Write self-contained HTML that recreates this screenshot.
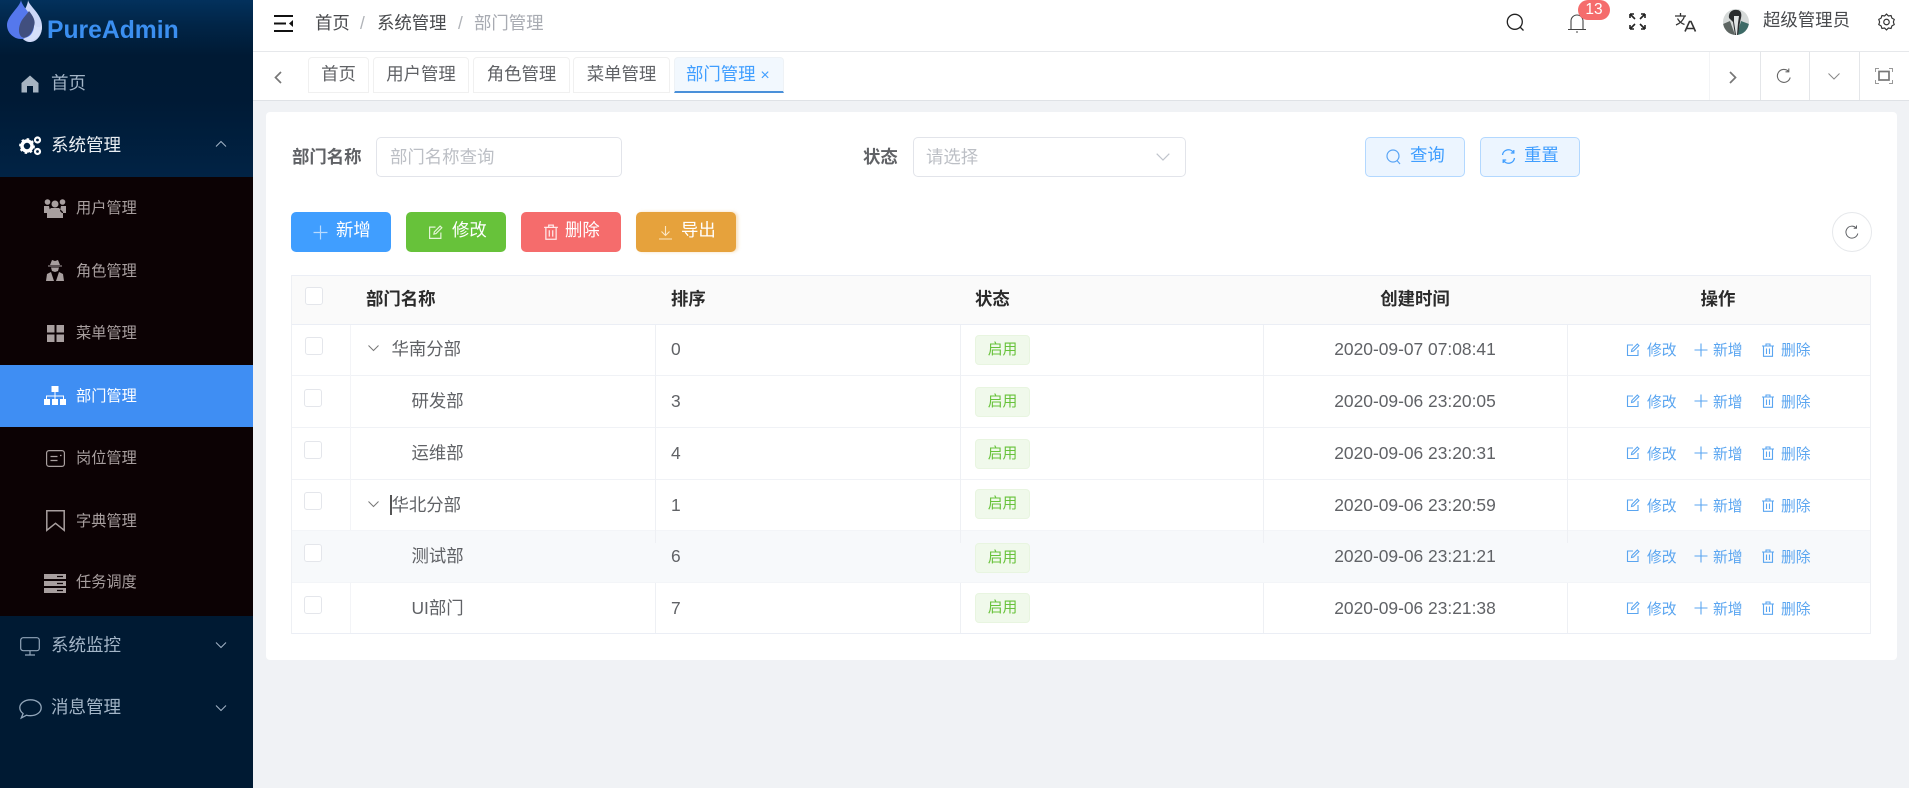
<!DOCTYPE html>
<html lang="zh-CN">
<head>
<meta charset="utf-8">
<title>部门管理</title>
<style>
*{box-sizing:border-box;margin:0;padding:0}
html,body{width:1909px;height:788px;overflow:hidden;background:#f0f2f5}
body{position:relative;font-family:"Liberation Sans","Noto Sans CJK SC",sans-serif;font-size:17.4px;color:#606266}
.a{position:absolute}
.t{position:absolute;white-space:nowrap;height:24px;line-height:24px}
.c{transform:translateX(-50%)}
svg{position:absolute;overflow:visible}
.top{color:#a3b5c7;font-size:17.5px}
.sub{color:#a89f9f;font-size:15.2px}
.tab{position:absolute;top:57px;height:36px;background:#fff;border:1px solid #f0f0f0;border-radius:4px 4px 0 0;color:#606266;line-height:33px;text-align:center}
.btn{position:absolute;top:212px;width:100px;height:40px;border-radius:5px;color:#fff}
.cb{position:absolute;width:18px;height:18px;background:#fff;border:1px solid #e4e6eb;border-radius:3px}
.tag{position:absolute;left:975px;width:55px;height:30px;background:#f0f9eb;border:1px solid #e8f5e0;border-radius:4px;color:#67c23a;font-size:14.8px;line-height:28px;text-align:center}
.h{height:1px;left:291px;width:1579px;background:#ebeef5}
.v{width:1px;background:#eef0f4}
.op{color:#5aa5f0;font-size:14.8px}
.th{color:#2b2b2b;font-weight:700}
.ic{fill:none;stroke:#5aa5f5;stroke-width:1.2}
</style>
</head>
<body>
<svg width="0" height="0" style="position:absolute">
<defs>
<symbol id="edit" viewBox="0 0 14 14"><path d="M7 2H1.5v10.5H12V7M5.5 8.5l.4-2L11.3 1l1.6 1.6L7.5 8z" fill="none" stroke="currentColor" stroke-width="1.1"/></symbol>
<symbol id="plus" viewBox="0 0 14 14"><path d="M7 .5v13M.5 7h13" fill="none" stroke="currentColor" stroke-width="1.1"/></symbol>
<symbol id="trash" viewBox="0 0 14 14"><path d="M1 3h12M5 3V1h4v2M2.5 3v10.3h9V3M5.5 5.5v5.5M8.5 5.5v5.5" fill="none" stroke="currentColor" stroke-width="1.1"/></symbol>
</defs>
</svg>

<!-- SIDEBAR -->
<div class="a" style="left:0;top:0;width:253px;height:788px;background:linear-gradient(180deg,#03315c 0,#012547 25px,#001a34 56px,#001a35 100px,#012345 177px,#001a33 178px,#001a33 788px)"></div>
<div class="a" style="left:0;top:177px;width:253px;height:439px;background:#0c0204"></div>
<div class="a" style="left:0;top:365px;width:253px;height:62px;background:#3f8ef3"></div>

<svg style="left:6px;top:0" width="38" height="44" viewBox="0 0 38 44">
<path d="M22 0c1 6 14 14 14 26a12 15 0 0 1-24 2C12 17 22 8 22 0z" fill="#ced8f8"/>
<path d="M15 0c-1 7-14 16-14 25 0 8 7 14 14 14 8 0 13-6 13-14C28 16 16 7 15 0z" fill="#5578ec"/>
<path d="M23 11c4 5 7 10 5 15-1 6-5 11-10 12-2-1-3-1-4-3-2-4-1-10 2-15 2-3 5-6 7-9z" fill="#414f7e"/>
<path d="M28 26c1 6-3 11-10 12 4 3 8 3 11 1 5-3 7-8 7-13-2 2-5 1-8 0z" fill="#d5dffa"/>
</svg>
<div class="t" style="left:47px;top:19px;color:#3b8ff0;font-size:24.7px;font-weight:700">PureAdmin</div>

<svg style="left:21px;top:75px" width="18" height="18" viewBox="0 0 18 18"><path d="M9 .5L.5 8v9.5H6V11h6v6.500h5.500V8z" fill="#a6b4c2"/></svg>
<div class="t top" style="left:51px;top:71px">首页</div>

<svg style="left:19px;top:135px" width="23" height="21" viewBox="0 0 23 21"><circle cx="8" cy="11" r="5" fill="none" stroke="#fff" stroke-width="3.500"/><circle cx="8" cy="11" r="7" fill="none" stroke="#fff" stroke-width="1.800" stroke-dasharray="2.500 2.900"/><circle cx="18.500" cy="5" r="2.500" fill="none" stroke="#fff" stroke-width="2.200"/><circle cx="18.500" cy="16.500" r="2.500" fill="none" stroke="#fff" stroke-width="2.200"/></svg>
<div class="t" style="left:51px;top:133px;color:#e9eef3;font-size:17.5px">系统管理</div>
<svg style="left:215px;top:140px" width="12" height="8" viewBox="0 0 12 8"><path d="M1 6.500l5-5 5 5" fill="none" stroke="#a3b5c7" stroke-width="1"/></svg>

<svg style="left:44px;top:197px" width="22" height="22" viewBox="0 0 22 22"><g fill="#a89f9f"><circle cx="3.500" cy="5" r="2.800"/><circle cx="18.500" cy="5" r="2.800"/><circle cx="11" cy="7" r="3.500"/><path d="M0 9h5l1 5-2 2H0zM22 9h-5l-1 5 2 2h4zM3 21v-6l4-4h8l4 4v6z"/></g></svg>
<div class="t sub" style="left:76px;top:197px">用户管理</div>

<svg style="left:45px;top:260px" width="20" height="22" viewBox="0 0 20 22"><g fill="#a89f9f"><path d="M5 5L7 0l3 1 3-1 2 5zM3 5.500h14v1H3zM6 7.500h8L13 11l-3 1-3-1zM1 21l1-7 4-2 3 9zM19 21l-1-7-4-2-3 9z"/></g></svg>
<div class="t sub" style="left:76px;top:260px">角色管理</div>

<svg style="left:47px;top:325px" width="17" height="17" viewBox="0 0 17 17"><g fill="#a89f9f"><rect width="7.500" height="7.500"/><rect x="9.500" width="7.500" height="7.500"/><rect y="9.500" width="7.500" height="7.500"/><rect x="9.500" y="9.500" width="7.500" height="7.500"/></g></svg>
<div class="t sub" style="left:76px;top:322px">菜单管理</div>

<svg style="left:44px;top:386px" width="22" height="20" viewBox="0 0 22 20"><g fill="#fff"><rect x="7.500" y="0" width="7" height="6"/><rect x="0" y="13" width="6" height="6"/><rect x="8" y="13" width="6" height="6"/><rect x="16" y="13" width="6" height="6"/><path d="M10.500 6h1v3.500H20V13h-1v-2.500h-7.500V13h-1v-2.500H3V13H2V9.500h8.500z"/></g></svg>
<div class="t sub" style="left:76px;top:385px;color:#fff">部门管理</div>

<svg style="left:46px;top:450px" width="19" height="17" viewBox="0 0 19 17"><rect x=".6" y=".6" width="17.800" height="15.800" rx="2.500" fill="none" stroke="#a89f9f" stroke-width="1.200"/><path d="M4.500 6.500h7M4.500 10.500h7M14 5.500h1.500" stroke="#a89f9f" stroke-width="1.200" fill="none"/></svg>
<div class="t sub" style="left:76px;top:447px">岗位管理</div>

<svg style="left:46px;top:510px" width="19" height="22" viewBox="0 0 19 22"><path d="M.8.800h17.400v19.500l-8.700-7-8.700 7z" fill="none" stroke="#a89f9f" stroke-width="1.500"/></svg>
<div class="t sub" style="left:76px;top:510px">字典管理</div>

<svg style="left:44px;top:574px" width="22" height="19" viewBox="0 0 22 19"><g fill="#a89f9f"><rect width="22" height="5"/><rect y="7" width="22" height="5"/><rect y="14" width="22" height="5"/></g><path d="M13 2.500h6M13 9.500h6M13 16.500h6" stroke="#0c0204" stroke-width="1.200"/></svg>
<div class="t sub" style="left:76px;top:571px">任务调度</div>

<svg style="left:20px;top:637px" width="20" height="19" viewBox="0 0 20 19"><rect x=".7" y=".7" width="18.600" height="13" rx="2.500" fill="none" stroke="#92a6ba" stroke-width="1.200"/><path d="M10 14v4M5 18h10" stroke="#92a6ba" stroke-width="1.200" fill="none"/></svg>
<div class="t top" style="left:51px;top:633px">系统监控</div>
<svg style="left:215px;top:641px" width="12" height="8" viewBox="0 0 12 8"><path d="M1 1.500l5 5 5-5" fill="none" stroke="#a3b5c7" stroke-width="1"/></svg>

<svg style="left:19px;top:699px" width="23" height="20" viewBox="0 0 23 20"><path d="M11.500.8C5.500.8.800 4.300.800 8.700c0 2.300 1.300 4.300 3.300 5.800L2.300 19l5.200-2.800c1.300.4 2.600.5 4 .5 6 0 10.700-3.500 10.700-8S17.500.8 11.500.8z" fill="none" stroke="#92a6ba" stroke-width="1.300"/></svg>
<div class="t top" style="left:51px;top:695px">消息管理</div>
<svg style="left:215px;top:704px" width="12" height="8" viewBox="0 0 12 8"><path d="M1 1.500l5 5 5-5" fill="none" stroke="#a3b5c7" stroke-width="1"/></svg>

<!-- HEADER -->
<div class="a" style="left:253px;top:0;width:1656px;height:52px;background:#fff;border-bottom:1px solid #e6e8eb"></div>
<svg style="left:274px;top:15px" width="19" height="17" viewBox="0 0 19 17"><path d="M0 1h19M0 8.500h12M0 16h19" stroke="#111" stroke-width="2" fill="none"/><path d="M19 5v7l-4-3.500z" fill="#111"/></svg>
<div class="t" style="left:315px;top:11px;color:#484a4d">首页</div>
<div class="t" style="left:360px;top:11px;color:#b0b3b8">/</div>
<div class="t" style="left:377px;top:11px;color:#484a4d">系统管理</div>
<div class="t" style="left:458px;top:11px;color:#b0b3b8">/</div>
<div class="t" style="left:474px;top:11px;color:#a8abb2">部门管理</div>

<svg style="left:1506px;top:13px" width="19" height="19" viewBox="0 0 19 19"><circle cx="8.800" cy="8.800" r="7.500" fill="none" stroke="#222" stroke-width="1.300"/><path d="M14 14l3.500 3.500" stroke="#222" stroke-width="1.300"/></svg>
<svg style="left:1568px;top:13px" width="19" height="20" viewBox="0 0 19 20"><path d="M0 16.500h18M3 16.500V8a6 6 0 0 1 12 0v8.500M8 19h2" fill="none" stroke="#444" stroke-width="1.100"/></svg>
<div class="a" style="left:1578px;top:0;width:32px;height:20px;background:#f56c6c;border-radius:10px;color:#fff;font-size:15.500px;line-height:20px;text-align:center">13</div>
<svg style="left:1629px;top:13px" width="17" height="17" viewBox="0 0 17 17"><path d="M1 1l5 5M1 1h4M1 1v4M16 1l-5 5M16 1h-4M16 1v4M1 16l5-5M1 16h4M1 16v-4M16 16l-5-5M16 16h-4M16 16v-4" fill="none" stroke="#222" stroke-width="1.600"/></svg>
<svg style="left:1675px;top:13px" width="21" height="19" viewBox="0 0 21 19"><path d="M0 3h11M5.500 0v3M9.500 3c-1 4-4 7-8.500 9M2.500 5.500c1.500 3 4 5 7 6" fill="none" stroke="#333" stroke-width="1.300"/><path d="M10 18.500l4.500-10h1.500l4.500 10M11.500 15.500h7.500" fill="none" stroke="#333" stroke-width="1.600"/></svg>
<svg style="left:1723px;top:9px" width="26" height="26" viewBox="0 0 26 26"><defs><clipPath id="av"><circle cx="13" cy="13" r="13"/></clipPath></defs><g clip-path="url(#av)"><rect width="26" height="26" fill="#d5d9d8"/><path d="M0 15l7-3 5 14H0z" fill="#5d6562"/><path d="M26 15l-8-3-4 14h12z" fill="#3d6a66"/><path d="M6 9c-1-5 3-9 8-8 4 0 5 4 4 8l-1 4-2 13h-3l-2-13z" fill="#2a2c2e"/><path d="M11 7h5l-1 7-1 12h-1l-2-13z" fill="#e1e4e4"/></g></svg>
<div class="t" style="left:1763px;top:8px;color:#484a4d">超级管理员</div>
<svg style="left:1878px;top:13px" width="17" height="18" viewBox="0 0 16 17"><path d="M8 1l1.800 1.800 2.500-.4.800 2.400 2.200 1.200-.8 2.500.8 2.500-2.200 1.200-.8 2.400-2.500-.4L8 16l-1.800-1.800-2.500.4-.8-2.400L.7 11l.8-2.500L.7 6l2.200-1.200.8-2.400 2.500.4z" fill="none" stroke="#333" stroke-width="1.100"/><circle cx="8" cy="8.500" r="2.600" fill="none" stroke="#333" stroke-width="1.100"/></svg>

<!-- TAB BAR -->
<div class="a" style="left:253px;top:52px;width:1656px;height:49px;background:#fff;border-bottom:1px solid #dfe2e6"></div>
<svg style="left:274px;top:71px" width="8" height="13" viewBox="0 0 8 13"><path d="M7 1L1.500 6.500 7 12" fill="none" stroke="#777" stroke-width="1.700"/></svg>
<div class="tab" style="left:308px;width:61px">首页</div>
<div class="tab" style="left:373px;width:96px">用户管理</div>
<div class="tab" style="left:473px;width:97px">角色管理</div>
<div class="tab" style="left:573px;width:97px">菜单管理</div>
<div class="tab" style="left:674px;width:110px;background:#f2f8fe;border-color:#eef2f6;border-bottom:2px solid #4a90d9;color:#409eff;text-align:left;padding-left:11px">部门管理 <span style="font-size:16px">×</span></div>

<div class="a v" style="left:1709px;top:52px;height:48px;background:#f3f4f6"></div>
<div class="a v" style="left:1760px;top:52px;height:48px;background:#e4e6e9"></div>
<div class="a v" style="left:1809px;top:52px;height:48px;background:#e4e6e9"></div>
<div class="a v" style="left:1859px;top:52px;height:48px;background:#e4e6e9"></div>
<svg style="left:1729px;top:71px" width="8" height="13" viewBox="0 0 8 13"><path d="M1 1l5.500 5.500L1 12" fill="none" stroke="#777" stroke-width="1.700"/></svg>
<svg style="left:1776px;top:68px" width="16" height="16" viewBox="0 0 16 16"><path d="M14.200 9.500A6.500 6.500 0 1 1 12.500 3.300M12.800 .5v3.300H9.500" fill="none" stroke="#666" stroke-width="1.100"/></svg>
<svg style="left:1828px;top:73px" width="12" height="7" viewBox="0 0 12 7"><path d="M.5.500L6 6 11.500.5" fill="none" stroke="#888" stroke-width="1"/></svg>
<svg style="left:1875px;top:68px" width="18" height="16" viewBox="0 0 18 16"><rect x="4" y="3.500" width="10" height="8.500" fill="none" stroke="#777" stroke-width="1.700"/><path d="M.5 4V.5H4M14 .5h3.500V4M.5 12v3.500H4M14 15.500h3.500V12" fill="none" stroke="#999" stroke-width="1"/></svg>

<!-- CARD -->
<div class="a" style="left:266px;top:112px;width:1631px;height:548px;background:#fff;border-radius:4px"></div>

<div class="t" style="left:292px;top:145px;font-weight:700;color:#606266">部门名称</div>
<div class="a" style="left:376px;top:137px;width:246px;height:40px;border:1px solid #e2e4ea;border-radius:5px;background:#fff"></div>
<div class="t" style="left:390px;top:145px;color:#bcbfc5">部门名称查询</div>
<div class="t" style="left:863px;top:145px;font-weight:700;color:#606266">状态</div>
<div class="a" style="left:913px;top:137px;width:273px;height:40px;border:1px solid #e2e4ea;border-radius:5px;background:#fff"></div>
<div class="t" style="left:926px;top:145px;color:#bcbfc5">请选择</div>
<svg style="left:1156px;top:153px" width="14" height="8" viewBox="0 0 14 8"><path d="M.7.700L7 7 13.300.7" fill="none" stroke="#c0c4cc" stroke-width="1.200"/></svg>

<div class="a" style="left:1365px;top:137px;width:100px;height:40px;background:#ecf5ff;border:1px solid #b3d8ff;border-radius:5px"></div>
<svg style="left:1386px;top:149px" width="15" height="16" viewBox="0 0 15 16"><circle cx="7" cy="7" r="6" class="ic"/><path d="M11 11.500l3 3.500" class="ic"/></svg>
<div class="t" style="left:1410px;top:143px;color:#409eff">查询</div>
<div class="a" style="left:1480px;top:137px;width:100px;height:40px;background:#ecf5ff;border:1px solid #b3d8ff;border-radius:5px"></div>
<svg style="left:1501px;top:149px" width="15" height="15" viewBox="0 0 15 15"><path d="M1.500 6A6 6 0 0 1 12.500 3.500M13.500 9A6 6 0 0 1 2.500 11.500M12.800 1v3h-3M2.200 14v-3h3" fill="none" stroke="#409eff" stroke-width="1.300"/></svg>
<div class="t" style="left:1524px;top:143px;color:#409eff">重置</div>

<div class="btn" style="left:291px;background:#409eff"></div>
<svg style="left:313px;top:225px;color:#b9dbff" width="15" height="15"><use href="#plus"/></svg>
<div class="t" style="left:336px;top:218px;color:#fff">新增</div>
<div class="btn" style="left:406px;background:#67c23a"></div>
<svg style="left:428px;top:225px;color:#e4f5d8" width="15" height="15"><use href="#edit"/></svg>
<div class="t" style="left:452px;top:218px;color:#fff">修改</div>
<div class="btn" style="left:521px;background:#f56c6c"></div>
<svg style="left:543px;top:224px;color:#ffe8e8" width="16" height="16"><use href="#trash"/></svg>
<div class="t" style="left:565px;top:218px;color:#fff">删除</div>
<div class="btn" style="left:636px;background:#e6a23c;box-shadow:2px 0 3px rgba(230,162,60,.35)"></div>
<svg style="left:658px;top:225px" width="15" height="15" viewBox="0 0 15 15"><path d="M7.500 1v9M3.500 6.500l4 4 4-4M1 14h13" fill="none" stroke="#fbe6c4" stroke-width="1.100"/></svg>
<div class="t" style="left:681px;top:218px;color:#fff">导出</div>

<div class="a" style="left:1832px;top:212px;width:40px;height:40px;border:1px solid #e6e8eb;border-radius:50%"></div>
<svg style="left:1845px;top:225px" width="14" height="14" viewBox="0 0 14 14"><path d="M12.800 8.500A6 6 0 1 1 11 2.700M11.500 .5v2.800H8.700" fill="none" stroke="#606266" stroke-width="1"/></svg>

<!-- TABLE -->
<div class="a" style="left:291px;top:275px;width:1579px;height:50px;background:#fafafa;border-top:1px solid #ebeef5"></div>
<div class="a" style="left:291px;top:530px;width:1579px;height:52px;background:#f7f9fb"></div>
<div class="a h" style="top:324px"></div>
<div class="a h" style="top:375px;background:#f0f2f6"></div>
<div class="a h" style="top:427px;background:#f0f2f6"></div>
<div class="a h" style="top:479px;background:#f0f2f6"></div>
<div class="a h" style="top:530px;background:#f3f5f8"></div>
<div class="a h" style="top:582px;background:#f3f5f8"></div>
<div class="a h" style="top:633px"></div>
<div class="a v" style="left:291px;top:275px;height:359px"></div>
<div class="a v" style="left:1870px;top:275px;height:359px"></div>

<div class="a v" style="left:350px;top:325px;height:205px;background:#f3f4f7"></div>
<div class="a v" style="left:655px;top:325px;height:218px"></div>
<div class="a v" style="left:960px;top:325px;height:218px"></div>
<div class="a v" style="left:1263px;top:325px;height:218px"></div>
<div class="a v" style="left:1567px;top:325px;height:218px"></div>
<div class="a v" style="left:350px;top:583px;height:50px;background:#f3f4f7"></div>
<div class="a v" style="left:655px;top:583px;height:50px"></div>
<div class="a v" style="left:960px;top:583px;height:50px"></div>
<div class="a v" style="left:1263px;top:583px;height:50px"></div>
<div class="a v" style="left:1567px;top:583px;height:50px"></div>

<div class="cb" style="left:305px;top:287px"></div>
<div class="t th" style="left:366px;top:287px">部门名称</div>
<div class="t th" style="left:671px;top:287px">排序</div>
<div class="t th" style="left:975px;top:287px">状态</div>
<div class="t th c" style="left:1415px;top:287px">创建时间</div>
<div class="t th c" style="left:1718px;top:287px">操作</div>

<!-- rows -->
<div class="cb" style="left:305px;top:337px"></div>
<svg style="left:368px;top:345px" width="11" height="7" viewBox="0 0 11 7"><path d="M.5.500l5 5 5-5" fill="none" stroke="#777" stroke-width="1"/></svg>
<div class="t" style="left:391.500px;top:337px">华南分部</div>
<div class="t" style="left:671px;top:337px">0</div>
<div class="tag" style="top:335px">启用</div>
<div class="t c" style="left:1415px;top:337px">2020-09-07 07:08:41</div>

<div class="cb" style="left:304px;top:389px"></div>
<div class="t" style="left:411.500px;top:389px">研发部</div>
<div class="t" style="left:671px;top:389px">3</div>
<div class="tag" style="top:387px">启用</div>
<div class="t c" style="left:1415px;top:389px">2020-09-06 23:20:05</div>

<div class="cb" style="left:304px;top:441px"></div>
<div class="t" style="left:411.500px;top:441px">运维部</div>
<div class="t" style="left:671px;top:441px">4</div>
<div class="tag" style="top:439px">启用</div>
<div class="t c" style="left:1415px;top:441px">2020-09-06 23:20:31</div>

<div class="cb" style="left:304px;top:492px"></div>
<svg style="left:368px;top:501px" width="11" height="7" viewBox="0 0 11 7"><path d="M.5.500l5 5 5-5" fill="none" stroke="#777" stroke-width="1"/></svg>
<div class="a" style="left:390px;top:495px;width:1.500px;height:20px;background:#555"></div>
<div class="t" style="left:391.500px;top:493px">华北分部</div>
<div class="t" style="left:671px;top:493px">1</div>
<div class="tag" style="top:489px">启用</div>
<div class="t c" style="left:1415px;top:493px">2020-09-06 23:20:59</div>

<div class="cb" style="left:304px;top:544px"></div>
<div class="t" style="left:411.500px;top:544px">测试部</div>
<div class="t" style="left:671px;top:544px">6</div>
<div class="tag" style="top:543px">启用</div>
<div class="t c" style="left:1415px;top:544px">2020-09-06 23:21:21</div>

<div class="cb" style="left:304px;top:596px"></div>
<div class="t" style="left:411.500px;top:596px">UI部门</div>
<div class="t" style="left:671px;top:596px">7</div>
<div class="tag" style="top:593px">启用</div>
<div class="t c" style="left:1415px;top:596px">2020-09-06 23:21:38</div>

<!-- ops -->
<svg style="left:1626px;top:343px;color:#5aa5f0" width="14" height="14"><use href="#edit"/></svg><div class="t op" style="left:1647px;top:338.500px">修改</div><svg style="left:1694px;top:343px;color:#5aa5f0" width="14" height="14"><use href="#plus"/></svg><div class="t op" style="left:1713px;top:338.500px">新增</div><svg style="left:1761px;top:343px;color:#5aa5f0" width="14" height="14"><use href="#trash"/></svg><div class="t op" style="left:1781px;top:338.500px">删除</div>
<svg style="left:1626px;top:394px;color:#5aa5f0" width="14" height="14"><use href="#edit"/></svg><div class="t op" style="left:1647px;top:390.500px">修改</div><svg style="left:1694px;top:394px;color:#5aa5f0" width="14" height="14"><use href="#plus"/></svg><div class="t op" style="left:1713px;top:390.500px">新增</div><svg style="left:1761px;top:394px;color:#5aa5f0" width="14" height="14"><use href="#trash"/></svg><div class="t op" style="left:1781px;top:390.500px">删除</div>
<svg style="left:1626px;top:446px;color:#5aa5f0" width="14" height="14"><use href="#edit"/></svg><div class="t op" style="left:1647px;top:442.500px">修改</div><svg style="left:1694px;top:446px;color:#5aa5f0" width="14" height="14"><use href="#plus"/></svg><div class="t op" style="left:1713px;top:442.500px">新增</div><svg style="left:1761px;top:446px;color:#5aa5f0" width="14" height="14"><use href="#trash"/></svg><div class="t op" style="left:1781px;top:442.500px">删除</div>
<svg style="left:1626px;top:498px;color:#5aa5f0" width="14" height="14"><use href="#edit"/></svg><div class="t op" style="left:1647px;top:494.500px">修改</div><svg style="left:1694px;top:498px;color:#5aa5f0" width="14" height="14"><use href="#plus"/></svg><div class="t op" style="left:1713px;top:494.500px">新增</div><svg style="left:1761px;top:498px;color:#5aa5f0" width="14" height="14"><use href="#trash"/></svg><div class="t op" style="left:1781px;top:494.500px">删除</div>
<svg style="left:1626px;top:549px;color:#5aa5f0" width="14" height="14"><use href="#edit"/></svg><div class="t op" style="left:1647px;top:545.500px">修改</div><svg style="left:1694px;top:549px;color:#5aa5f0" width="14" height="14"><use href="#plus"/></svg><div class="t op" style="left:1713px;top:545.500px">新增</div><svg style="left:1761px;top:549px;color:#5aa5f0" width="14" height="14"><use href="#trash"/></svg><div class="t op" style="left:1781px;top:545.500px">删除</div>
<svg style="left:1626px;top:601px;color:#5aa5f0" width="14" height="14"><use href="#edit"/></svg><div class="t op" style="left:1647px;top:597.500px">修改</div><svg style="left:1694px;top:601px;color:#5aa5f0" width="14" height="14"><use href="#plus"/></svg><div class="t op" style="left:1713px;top:597.500px">新增</div><svg style="left:1761px;top:601px;color:#5aa5f0" width="14" height="14"><use href="#trash"/></svg><div class="t op" style="left:1781px;top:597.500px">删除</div>
</body>
</html>
